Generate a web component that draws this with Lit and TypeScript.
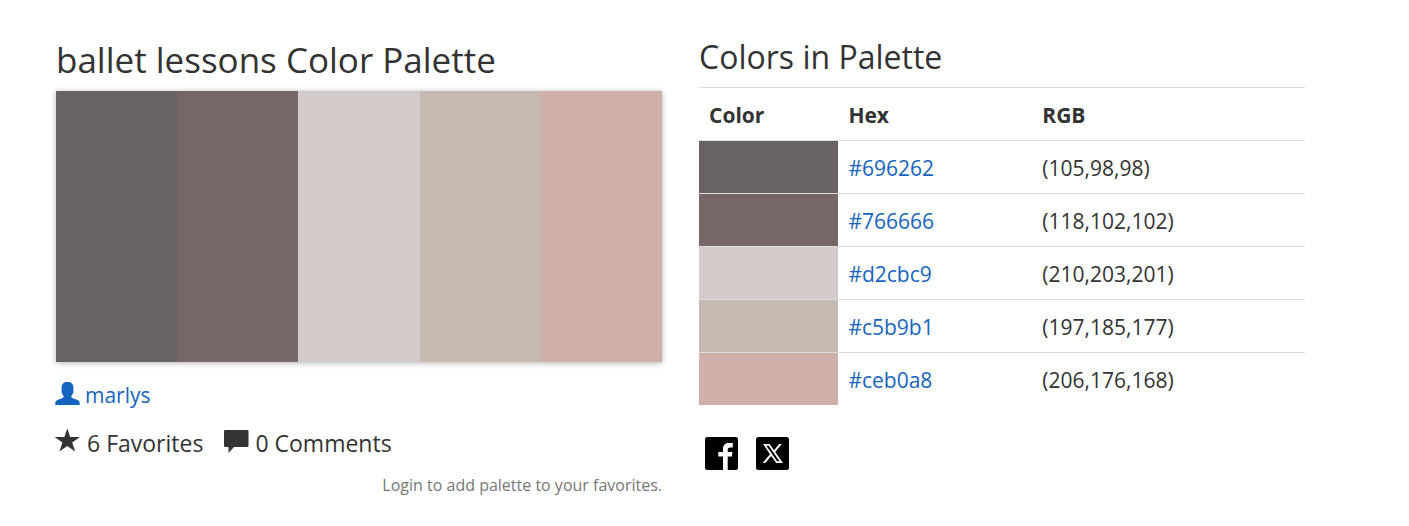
import { LitElement, html, css } from "lit";
import { customElement, property } from "lit/decorators.js";

interface Swatch {
  hex: string;
  rgb: string;
}

const PALETTE: Swatch[] = [
  { hex: "#696262", rgb: "(105,98,98)" },
  { hex: "#766666", rgb: "(118,102,102)" },
  { hex: "#d2cbc9", rgb: "(210,203,201)" },
  { hex: "#c5b9b1", rgb: "(197,185,177)" },
  { hex: "#ceb0a8", rgb: "(206,176,168)" },
];

@customElement("palette-strip")
class PaletteStrip extends LitElement {
  @property({ attribute: false }) colors: Swatch[] = [];

  static styles = css`
    :host {
      display: block;
    }
    .strip {
      display: flex;
      height: 271px;
      box-shadow: 0 1px 6px rgba(0, 0, 0, 0.3);
    }
    .band {
      flex: 1;
    }
  `;

  render() {
    return html`<div class="strip" role="img" aria-label="Palette preview">
      ${this.colors.map((c) => html`<div class="band" style="background:${c.hex}"></div>`)}
    </div>`;
  }
}

@customElement("color-table")
class ColorTable extends LitElement {
  @property({ attribute: false }) colors: Swatch[] = [];

  static styles = css`
    :host {
      display: block;
    }
    .table {
      width: 100%;
      border-collapse: collapse;
      table-layout: fixed;
      font-size: 21px;
      line-height: 32px;
    }
    .cell {
      padding: 11px 10px 9px;
      border-top: 1px solid #ddd;
      text-align: left;
    }
    .head {
      font-weight: 700;
    }
    .swatch-col {
      width: 23%;
    }
    .hex-col {
      width: 32%;
    }
    .link {
      color: #1565c0;
      text-decoration: none;
    }
  `;

  render() {
    return html`<table class="table">
      <colgroup>
        <col class="swatch-col" />
        <col class="hex-col" />
        <col />
      </colgroup>
      <thead>
        <tr>
          <th class="cell head" scope="col">Color</th>
          <th class="cell head" scope="col">Hex</th>
          <th class="cell head" scope="col">RGB</th>
        </tr>
      </thead>
      <tbody>
        ${this.colors.map(
          (c) => html`<tr>
            <td class="cell" style="background:${c.hex}"></td>
            <td class="cell"><a class="link" href="#">${c.hex}</a></td>
            <td class="cell">${c.rgb}</td>
          </tr>`
        )}
      </tbody>
    </table>`;
  }
}

@customElement("app-root")
class AppRoot extends LitElement {
  static styles = css`
    :host {
      display: block;
      box-sizing: border-box;
      padding: 33px 104px 24px 56px;
      background: #fff;
      color: #333;
      font-family: "Segoe UI", "Open Sans", "Noto Sans", sans-serif;
    }
    .columns {
      display: grid;
      grid-template-columns: 1fr 1fr;
      column-gap: 37px;
      align-items: start;
    }
    .title,
    .subtitle {
      margin: 0;
      font-weight: 400;
      white-space: nowrap;
    }
    .title {
      font-size: 35px;
      line-height: 54px;
      padding-bottom: 4px;
    }
    .subtitle {
      font-size: 32px;
      line-height: 48px;
      padding-bottom: 6px;
    }
    .author {
      display: flex;
      align-items: center;
      gap: 5px;
      width: fit-content;
      margin-top: 17px;
      font-size: 21px;
      line-height: 32px;
      color: #1565c0;
      text-decoration: none;
    }
    .stats {
      display: flex;
      gap: 21px;
      margin-top: 14px;
      font-size: 23px;
      line-height: 36px;
    }
    .stat {
      display: flex;
      align-items: center;
      gap: 6px;
    }
    .icon {
      display: block;
      width: 25px;
      height: 32px;
      fill: currentColor;
      overflow: visible;
    }
    .person {
      width: 24px;
    }
    .note {
      margin: 12px 0 0;
      text-align: right;
      font-size: 16px;
      line-height: 24px;
      color: #777;
    }
    .share {
      display: flex;
      gap: 18px;
      padding: 32px 6px 0;
    }
    .social {
      display: block;
      width: 33px;
      height: 33px;
    }
  `;

  render() {
    return html`<main class="columns">
      <section>
        <h1 class="title">ballet lessons Color Palette</h1>
        <palette-strip .colors=${PALETTE}></palette-strip>
        <a class="author" href="#">
          <svg class="icon person" viewBox="0 0 24 32" aria-hidden="true">
            <path d="M11.5 3C7.6 3 5.6 5 5.6 8.5V11.5C5.6 14 6.4 15.8 7.8 17.2C7.8 18.6 6.8 19 4.6 19.8L1.6 21C0 21.7 -.7 22.6 -.7 24V26H23.7V24C23.7 22.6 23 21.7 21.4 21L18.4 19.8C16.2 19 15.2 18.6 15.2 17.2C16.6 15.8 17.4 14 17.4 11.5V8.5C17.4 5 15.4 3 11.5 3Z" />
          </svg>
          <span>marlys</span>
        </a>
        <div class="stats">
          <span class="stat">
            <svg class="icon" viewBox="0 0 25 32" aria-hidden="true">
              <path d="M11.3 1.5L14.2 10H24L16.2 15.4L19.2 24.5L11.3 19L3.4 24.5L6.4 15.4L-1.4 10H8.4Z" />
            </svg>
            <span>6 Favorites</span>
          </span>
          <span class="stat">
            <svg class="icon" viewBox="0 0 25 32" aria-hidden="true">
              <path d="M1.2 3H23.3Q24.5 3 24.5 4.2V18.8Q24.5 20 23.3 20H10L4.5 26V20H1.2Q0 20 0 18.8V4.2Q0 3 1.2 3Z" />
            </svg>
            <span>0 Comments</span>
          </span>
        </div>
        <p class="note">Login to add palette to your favorites.</p>
      </section>
      <section>
        <h2 class="subtitle">Colors in Palette</h2>
        <color-table .colors=${PALETTE}></color-table>
        <div class="share">
          <a href="#" aria-label="Share on Facebook">
            <svg class="social" viewBox="0 0 33 33" aria-hidden="true">
              <rect width="33" height="33" rx="2.5" />
              <path fill="#fff" d="M18 33V19.6H13.3V15H18V11.7C18 8 20.5 6 24 6H27.8V10.4H25.2C23.2 10.4 22.7 11.3 22.7 12.8V15H27.5L26.9 19.6H22.7V33Z" />
            </svg>
          </a>
          <a href="#" aria-label="Share on X">
            <svg class="social" viewBox="0 0 33 33" aria-hidden="true">
              <rect width="33" height="33" rx="2.5" />
              <path fill="#fff" fill-rule="evenodd" d="M7 7H13.6L18 13.2L23.2 7H25.8L19.2 14.9L27 26H20.2L15.2 18.9L9.2 26H6.6L14 17.2ZM10.3 8.8L21.1 24.2H23.5L12.7 8.8Z" />
            </svg>
          </a>
        </div>
      </section>
    </main>`;
  }
}
